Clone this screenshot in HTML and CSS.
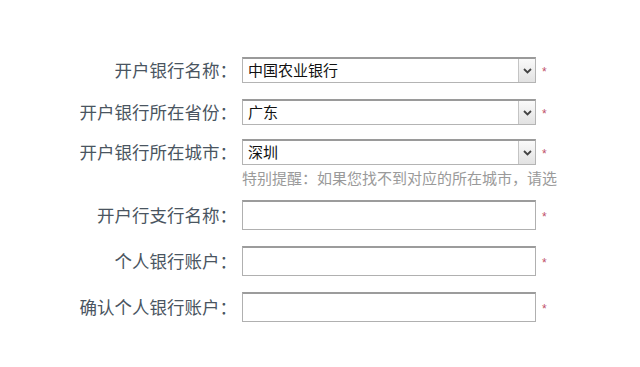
FILE: index.html
```html
<!DOCTYPE html>
<html lang="zh">
<head>
<meta charset="utf-8">
<link rel="stylesheet" href="styles.css">
</head>
<body>
<div class="form">
  <div class="row r1">
    <div class="label">开户银行名称：</div>
    <div class="select"><span class="val">中国农业银行</span><span class="btn"><svg width="9" height="6" viewBox="0 0 9 6"><path d="M1 1 L4.5 4.5 L8 1" fill="none" stroke="#444" stroke-width="1.8"/></svg></span></div>
    <span class="req">*</span>
  </div>
  <div class="row r2">
    <div class="label">开户银行所在省份：</div>
    <div class="select"><span class="val">广东</span><span class="btn"><svg width="9" height="6" viewBox="0 0 9 6"><path d="M1 1 L4.5 4.5 L8 1" fill="none" stroke="#444" stroke-width="1.8"/></svg></span></div>
    <span class="req">*</span>
  </div>
  <div class="row r3">
    <div class="label">开户银行所在城市：</div>
    <div class="select"><span class="val">深圳</span><span class="btn"><svg width="9" height="6" viewBox="0 0 9 6"><path d="M1 1 L4.5 4.5 L8 1" fill="none" stroke="#444" stroke-width="1.8"/></svg></span></div>
    <span class="req">*</span>
  </div>
  <div class="hint">特别提醒：如果您找不到对应的所在城市，请选</div>
  <div class="row r4">
    <div class="label">开户行支行名称：</div>
    <div class="input"></div>
    <span class="req">*</span>
  </div>
  <div class="row r5">
    <div class="label">个人银行账户：</div>
    <div class="input"></div>
    <span class="req">*</span>
  </div>
  <div class="row r6">
    <div class="label">确认个人银行账户：</div>
    <div class="input"></div>
    <span class="req">*</span>
  </div>
</div>
</body>
</html>
```
FILE: styles.css
```css
html, body {
  margin: 0;
  padding: 0;
  background: #ffffff;
}
body {
  font-family: "Noto Sans CJK SC", "Liberation Sans", sans-serif;
  width: 640px;
  height: 367px;
  overflow: hidden;
}
.form {
  padding-top: 57px;
  display: flex;
  flex-direction: column;
}
.row {
  display: flex;
  align-items: center;
}
.r2 { margin-top: 16px; }
.r3 { margin-top: 14px; }
.r4 { margin-top: 11px; }
.r5, .r6 { margin-top: 16px; }
.label {
  width: 237px;
  text-align: right;
  font-size: 17.5px;
  color: #4a5561;
  line-height: 20px;
  white-space: nowrap;
}
.select {
  margin-left: 5px;
  width: 294px;
  height: 26px;
  box-sizing: border-box;
  border: 1px solid #b4b4b4;
  border-top: 2px solid #9a9a9a;
  display: flex;
  align-items: stretch;
  background: #fff;
}
.val {
  flex: 1;
  font-size: 15px;
  color: #111;
  padding-left: 5px;
  line-height: 22px;
}
.btn {
  width: 16px;
  border-left: 1px solid #c4c4c4;
  background: linear-gradient(#fafafa, #e2e2e2);
  display: flex;
  align-items: center;
  justify-content: center;
}
.input {
  margin-left: 5px;
  width: 294px;
  height: 30px;
  box-sizing: border-box;
  border: 1px solid #b0b0b0;
  border-top: 2px solid #9c9c9c;
  background: #fff;
}
.req {
  margin-left: 6px;
  color: #c0506a;
  font-size: 12px;
  font-family: "Liberation Sans", sans-serif;
  line-height: 12px;
  padding-top: 4px;
}
.hint {
  margin-left: 242px;
  white-space: nowrap;
  font-size: 15px;
  line-height: 22px;
  color: #9a9a9a;
  margin-top: 2px;
}
```
